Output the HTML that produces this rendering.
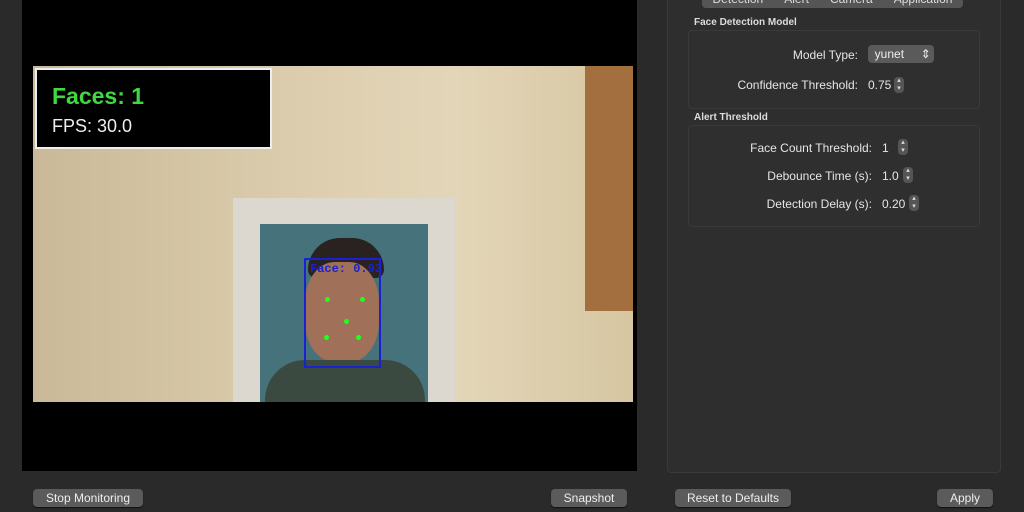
<!DOCTYPE html>
<html><head><style>
body{margin:0;width:1024px;height:512px;background:#2a2a2a;font-family:"Liberation Sans",sans-serif;position:relative;overflow:hidden;color:#ddd}
.a{position:absolute}
.btn{position:absolute;height:18px;top:489px;background:#5b5b5b;border-radius:4px;color:#eee;font-size:12px;line-height:18px;text-align:center;box-shadow:0 1px 1px #111}
.lbl{position:absolute;font-size:12px;color:#e6e6e6;text-align:right}
.box{position:absolute;left:688px;width:290px;background:#2f2f2f;border:1px solid #3a3a3a;border-radius:4px}
.st{position:absolute;width:10px;height:16px;background:#555;border-radius:4px;font-size:7px;line-height:8px;text-align:center;color:#ddd}
</style></head><body>
<div class="a" style="left:22px;top:0;width:615px;height:471px;background:#000"></div>
<div class="a" style="left:33px;top:66px;width:600px;height:336px;background:linear-gradient(90deg,#c9b998 0%,#dccdae 45%,#e3d6b8 70%,#d6c6a2 100%)"></div>
<div class="a" style="left:585px;top:66px;width:48px;height:245px;background:#a36f3e"></div>
<div class="a" style="left:233px;top:198px;width:222px;height:204px;background:#dcd8d0"></div>
<div class="a" style="left:260px;top:224px;width:168px;height:178px;background:#46727c"></div>
<div class="a" style="left:308px;top:238px;width:76px;height:40px;background:#2a2220;border-radius:40px 40px 10px 10px"></div>
<div class="a" style="left:305px;top:262px;width:74px;height:100px;background:#a07058;border-radius:40%"></div>
<div class="a" style="left:265px;top:360px;width:160px;height:42px;background:#3a4a40;border-radius:40px 40px 0 0"></div>
<div class="a" style="left:304px;top:258px;width:73px;height:106px;border:2px solid #1a22d0"></div>
<div class="a" style="left:310px;top:262px;font:bold 12px 'Liberation Mono',monospace;color:#1a22d0">Face: 0.93</div>
<div class="a" style="left:325px;top:297px;width:5px;height:5px;border-radius:50%;background:#2f2"></div>
<div class="a" style="left:360px;top:297px;width:5px;height:5px;border-radius:50%;background:#2f2"></div>
<div class="a" style="left:344px;top:319px;width:5px;height:5px;border-radius:50%;background:#2f2"></div>
<div class="a" style="left:324px;top:335px;width:5px;height:5px;border-radius:50%;background:#2f2"></div>
<div class="a" style="left:356px;top:335px;width:5px;height:5px;border-radius:50%;background:#2f2"></div>
<div class="a" style="left:35px;top:68px;width:233px;height:77px;background:#000;border:2px solid #eee"></div>
<div class="a" style="left:52px;top:83px;font-size:23px;font-weight:bold;color:#3fd83f">Faces: 1</div>
<div class="a" style="left:52px;top:116px;font-size:18px;color:#eee">FPS: 30.0</div>

<div class="a" style="left:667px;top:-2px;width:332px;height:473px;background:#2e2e2e;border:1px solid #3a3a3a;border-radius:4px"></div>
<div class="a" style="left:702px;top:-8px;width:261px;height:16px;background:#555;border-radius:4px;font-size:12px;line-height:14px;color:#ddd;display:flex;justify-content:space-around">
<span>Detection</span><span>Alert</span><span>Camera</span><span>Application</span></div>
<div class="a" style="left:694px;top:17px;font-size:10px;font-weight:bold;color:#ddd">Face Detection Model</div>
<div class="box" style="top:30px;height:77px"></div>
<div class="lbl" style="left:700px;width:158px;top:48px">Model Type:</div>
<div class="a" style="left:868px;top:45px;width:66px;height:18px;background:#5a5a5a;border-radius:4px;font-size:12px;line-height:18px;color:#eee">&nbsp;&nbsp;yunet&nbsp;&nbsp;&nbsp;&nbsp;&nbsp;⇕</div>
<div class="lbl" style="left:700px;width:158px;top:78px">Confidence Threshold:</div>
<div class="lbl" style="left:868px;top:78px">0.75</div><div class="st" style="left:894px;top:77px">▴<br>▾</div>
<div class="a" style="left:694px;top:112px;font-size:10px;font-weight:bold;color:#ddd">Alert Threshold</div>
<div class="box" style="top:125px;height:100px"></div>
<div class="lbl" style="left:700px;width:172px;top:141px">Face Count Threshold:</div>
<div class="lbl" style="left:882px;top:141px">1</div><div class="st" style="left:898px;top:139px">▴<br>▾</div>
<div class="lbl" style="left:700px;width:172px;top:169px">Debounce Time (s):</div>
<div class="lbl" style="left:882px;top:169px">1.0</div><div class="st" style="left:903px;top:167px">▴<br>▾</div>
<div class="lbl" style="left:700px;width:172px;top:197px">Detection Delay (s):</div>
<div class="lbl" style="left:882px;top:197px">0.20</div><div class="st" style="left:909px;top:195px">▴<br>▾</div>

<div class="btn" style="left:33px;width:110px">Stop Monitoring</div>
<div class="btn" style="left:551px;width:76px">Snapshot</div>
<div class="btn" style="left:675px;width:116px">Reset to Defaults</div>
<div class="btn" style="left:937px;width:56px">Apply</div>
</body></html>
